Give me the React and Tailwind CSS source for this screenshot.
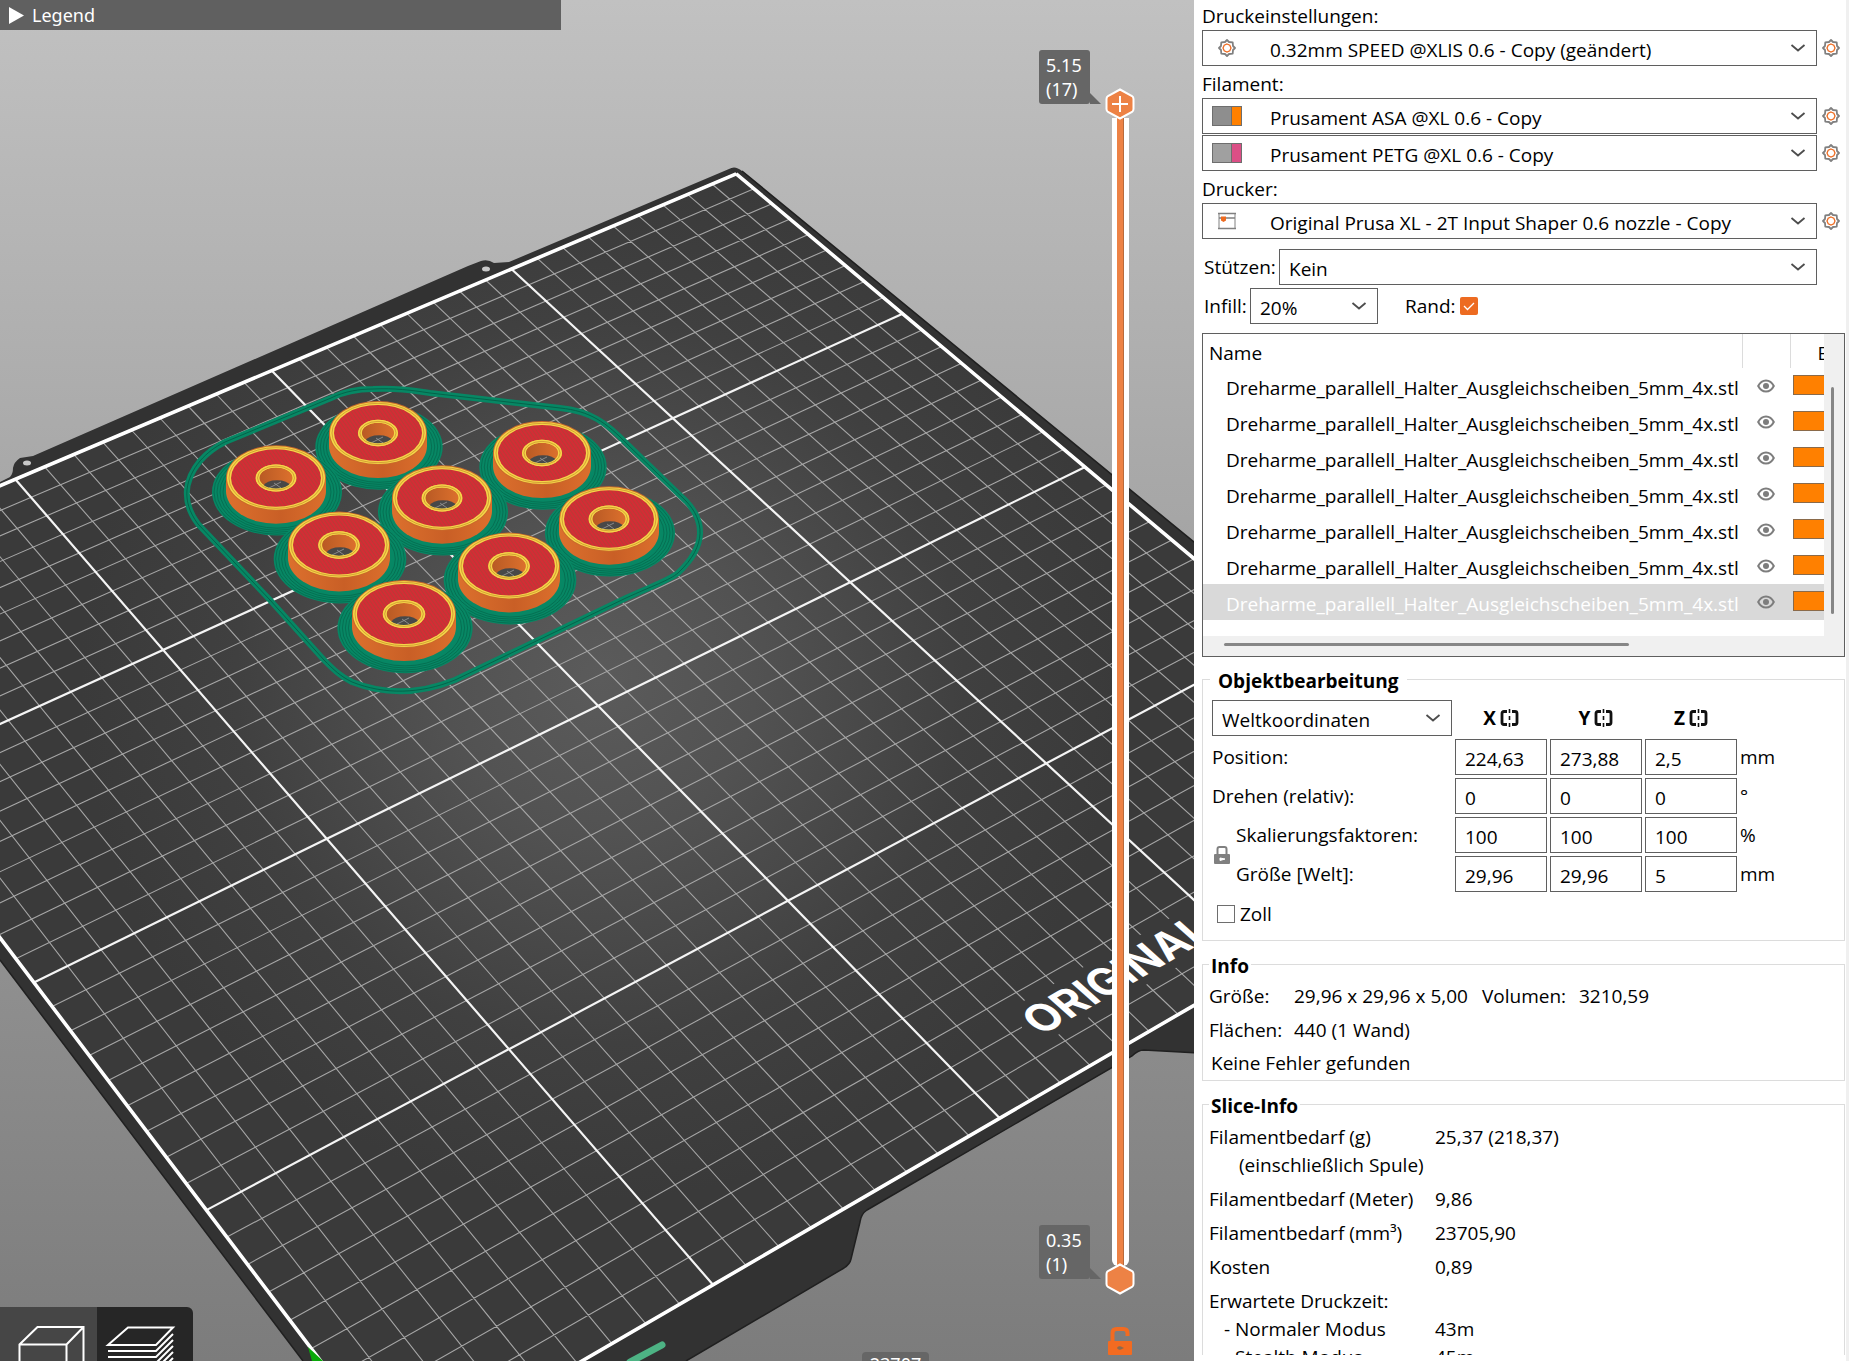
import { useState } from 'react';

/* ---------- 3D view ---------- */

// Maps bed tiles (0..4 in both directions) to screen space
const project = (x, y) => {
  const s = (x - 1) / 2;
  const t = (y - 1) / 3;
  const w = 1 + 0.080647 * s + 0.169972 * t;
  return [
    (508.94 + 621.68 * s - 491.01 * t) / w,
    (1049.2 - 224.23 * s - 488.55 * t) / w,
  ];
};

const line = (a, b) => {
  const [x1, y1] = project(...a);
  const [x2, y2] = project(...b);
  return `M${x1.toFixed(1)} ${y1.toFixed(1)}L${x2.toFixed(1)} ${y2.toFixed(1)}`;
};

const CELLS = 36;
const thinLines = [];
const thickLines = [];
for (let i = 0; i <= CELLS; i++) {
  const p = i / 9;
  const target = i % 9 === 0 ? thickLines : thinLines;
  target.push(line([p, 0], [p, 4]), line([0, p], [4, p]));
}
const bedArea = [[0, 0], [4, 0], [4, 4], [0, 4]].map((p) => project(...p).join(',')).join(' ');
const bedBorder = [
  line([0, 0], [4, 0]),
  line([4, 0], [4, 4]),
  line([4, 4], [0, 4]),
  line([0, 4], [0, 0]),
].join('');

const rings = [
  { x: 378, y: 433, rx: 49 },
  { x: 276, y: 478, rx: 50 },
  { x: 542, y: 453, rx: 49 },
  { x: 442, y: 498, rx: 50 },
  { x: 339, y: 545, rx: 51 },
  { x: 609, y: 519, rx: 50 },
  { x: 509, y: 566, rx: 51 },
  { x: 404, y: 614, rx: 52 },
];

const skirt =
  'M373 389C395 388 410 390 430 393L560 408C590 411 606 422 628 445L686 501C704 520 708 545 678 573C670 580 652 586 626 598L455 680C420 694 385 695 352 682C340 676 334 670 324 660L270 600L198 524C180 500 186 478 200 461C208 452 215 447 225 442L331 398C345 391 360 389 373 389Z';

function Brim({ x, y, rx }) {
  const r = rx * 1.3;
  return (
    <g>
      <ellipse cx={x + 1} cy={y + 14} rx={r} ry={r * 0.67} fill="#078764" />
      {[2, 5, 8, 11].map((d) => (
        <ellipse
          key={d}
          cx={x + 1}
          cy={y + 14}
          rx={r - d}
          ry={(r - d) * 0.67}
          fill="none"
          stroke="#056a4e"
          strokeWidth="0.8"
        />
      ))}
    </g>
  );
}

function Ring({ x, y, rx }) {
  const ry = rx * 0.655;
  const hx = rx * 0.41;
  const hy = rx * 0.27;
  const clip = `hole-${x}`;
  return (
    <g>
      <clipPath id={clip}>
        <ellipse cx={x} cy={y} rx={hx} ry={hy} />
      </clipPath>
      <path
        d={`M${x - rx} ${y}V${y + 13}A${rx} ${ry} 0 0 0 ${x + rx} ${y + 13}V${y}Z`}
        fill="url(#side)"
      />
      <ellipse cx={x} cy={y} rx={rx} ry={ry} fill="#c9692b" />
      <ellipse cx={x} cy={y} rx={rx - 1} ry={ry - 1} fill="#f5d548" />
      <ellipse cx={x} cy={y} rx={rx - 3} ry={ry - 2.4} fill="none" stroke="#c68a2c" strokeWidth="0.7" />
      <ellipse cx={x} cy={y} rx={rx - 5} ry={ry - 4} fill="url(#infill)" />
      <ellipse cx={x} cy={y} rx={hx} ry={hy} fill="#f5d548" />
      <ellipse cx={x} cy={y} rx={hx - 4} ry={hy - 3} fill="url(#bore)" />
      <g clipPath={`url(#${clip})`}>
        <path
          d={`M${x - 13} ${y + 8}A15 9 0 0 1 ${x + 15} ${y + 8}A17 10 0 0 1 ${x - 13} ${y + 8}Z`}
          fill="#484848"
        />
        <path d={`M${x - 7} ${y + 10}l12 -6M${x - 2} ${y + 5}l7 5`} stroke="#9a9a9a" strokeWidth="0.8" />
      </g>
      <ellipse cx={x} cy={y} rx={hx - 2} ry={hy - 1.6} fill="none" stroke="#f5d548" strokeWidth="3" />
      <ellipse cx={x} cy={y} rx={hx - 2} ry={hy - 1.6} fill="none" stroke="#c68a2c" strokeWidth="0.7" />
    </g>
  );
}

function BedScene() {
  return (
    <svg
      className="absolute inset-0 w-full h-full"
      viewBox="0 0 1194 1361"
      preserveAspectRatio="xMinYMin slice"
      aria-hidden="true"
    >
      <defs>
        <radialGradient id="bed" gradientUnits="userSpaceOnUse" cx="600" cy="680" r="520">
          <stop offset="0" stopColor="#5b5b5b" />
          <stop offset="0.3" stopColor="#525252" />
          <stop offset="0.7" stopColor="#404040" />
          <stop offset="1" stopColor="#3a3a3a" />
        </radialGradient>
        <linearGradient id="side" x1="0" x2="1" y1="0" y2="0">
          <stop offset="0" stopColor="#dc702d" />
          <stop offset="0.55" stopColor="#c95f26" />
          <stop offset="1" stopColor="#dc6f2c" />
        </linearGradient>
        <linearGradient id="bore" x1="0" x2="1" y1="0" y2="0">
          <stop offset="0" stopColor="#b95a24" />
          <stop offset="1" stopColor="#dc702d" />
        </linearGradient>
        <pattern id="infill" width="3" height="3" patternUnits="userSpaceOnUse" patternTransform="rotate(-35)">
          <rect width="3" height="3" fill="#d42c35" />
          <rect width="1" height="3" fill="#b93b36" />
        </pattern>
      </defs>

      {/* Sheet */}
      <path
        d="M729 169Q735 165 742 171L1200 547V1053L1144 1050Q1138 1050 1132 1056L867 1210Q861 1214 860 1222L851 1259Q850 1264 844 1268L686 1361H303L0 960V482L10 477Q13 474 13 468Q14 462 20 458L33 456L468 266L481 261Q488 259 494 263L509 262Z"
        fill="#323232"
      />
      <polygon points={bedArea} fill="url(#bed)" />
      <ellipse cx="486" cy="269" rx="4" ry="2.5" fill="#c8c8c8" />
      <ellipse cx="27" cy="463" rx="4" ry="2.5" fill="#c8c8c8" />
      <path d="M742 171L1200 547M1200 1053L1144 1050Q1138 1050 1132 1056L867 1210Q861 1214 860 1222L851 1259Q850 1264 844 1268L686 1361M303 1361L0 960" fill="none" stroke="#202020" strokeWidth="1.5" />

      {/* Grid */}
      <path d={thinLines.join('')} stroke="#a6a6a6" strokeWidth="1.1" />
      <path d={thickLines.join('')} stroke="#f4f4f4" strokeWidth="2.2" />
      <path d={bedBorder} stroke="#ffffff" strokeWidth="3.6" />

      {/* Bed print */}
      <polygon points="1022,1002 1200,901 1200,954 1056,1036 1022,1032" fill="url(#bed)" />
      <text
        transform="translate(1041 1036) rotate(-30) skewX(18)"
        fontFamily="Inter, 'Liberation Sans', sans-serif"
        fontWeight="700"
        fontSize="42"
        fill="#ffffff"
      >
        ORIGINAL
      </text>

      {/* Skirt and brims */}
      <path d={skirt} fill="none" stroke="#078764" strokeWidth="6" />
      <path d={skirt} fill="none" stroke="#05634a" strokeWidth="1" />
      {rings.map((r) => (
        <Brim key={`${r.x}-${r.y}`} {...r} />
      ))}
      {rings.map((r) => (
        <Ring key={`${r.x}-${r.y}`} {...r} />
      ))}

      {/* Axes */}
      <path d="M308 1347L323 1361H312Z" fill="#0aa80a" />
      <path d="M630 1362L662 1345" stroke="#4db384" strokeWidth="7" strokeLinecap="round" />
    </svg>
  );
}

function ViewButton({ label, active, children }) {
  return (
    <button
      type="button"
      aria-label={label}
      className={active ? 'w-24 h-full bg-[#262626] rounded-tr-md' : 'w-[97px] h-full bg-[#464646]'}
    >
      <svg className="w-full h-full" viewBox="0 0 96 54" fill="none" stroke="#ffffff" strokeWidth="2">
        {children}
      </svg>
    </button>
  );
}

function Thumb({ plus }) {
  return (
    <svg className="w-[30px] h-8 shrink-0 relative" viewBox="0 0 30 32">
      <path
        d="M15 1.5L27 8Q28.500 9 28.500 11V21Q28.500 23 27 24L15 30.500L3 24Q1.500 23 1.500 21V11Q1.500 9 3 8Z"
        fill="#ed8245"
        stroke="#ffffff"
        strokeWidth="2"
      />
      {plus && <path d="M15 8V24M7 16H23" stroke="#ffffff" strokeWidth="2" />}
    </svg>
  );
}

function LayerTag({ height, layer }) {
  return (
    <div className="relative w-[51px] h-[54px] bg-[#666666] rounded-[3px] px-[7px] text-white text-[18px] leading-6 py-[3px]">
      <div>{height}</div>
      <div>{layer}</div>
      <svg className="absolute left-full bottom-0 w-3 h-3" viewBox="0 0 12 12">
        <path d="M-1 0L11 12H-1Z" fill="#666666" />
      </svg>
    </div>
  );
}

function LayerSlider() {
  return (
    <div className="absolute right-[59px] top-[50px] bottom-[5px] w-[96px] flex flex-col">
      <div className="flex justify-between">
        <LayerTag height="5.15" layer="(17)" />
      </div>
      {/* Track */}
      <div className="relative flex-1 flex flex-col items-end -mt-4">
        <Thumb plus />
        <div className="w-[17px] mr-[6px] -mt-[2px] -mb-[2px] flex-1 bg-white rounded-b-md flex justify-center">
          <div className="w-[7px] bg-[#ed8245] border-r border-[#b96a3c]" />
        </div>
        <div className="w-full flex items-end justify-between h-[31px]">
          <div className="mb-4">
            <LayerTag height="0.35" layer="(1)" />
          </div>
          <Thumb />
        </div>
        <input
          type="range"
          aria-label="Oberste Schicht"
          min="1"
          max="17"
          defaultValue="17"
          className="absolute right-0 top-0 w-[30px] h-1/2 opacity-0 [writing-mode:vertical-lr]"
        />
        <input
          type="range"
          aria-label="Unterste Schicht"
          min="1"
          max="17"
          defaultValue="1"
          className="absolute right-0 bottom-0 w-[30px] h-1/2 opacity-0 [writing-mode:vertical-lr]"
        />
      </div>
      <button type="button" aria-label="Schieber entsperren" className="self-end mr-[3px] mt-8">
        <svg className="w-6 h-[29px]" viewBox="0 0 24 29">
          <path d="M4.500 15V6Q4.500 2 8.500 2H15.500Q19.500 2 19.500 6V9" fill="none" stroke="#f26b21" strokeWidth="4" />
          <path d="M1 14H23Q24 14 24 15V27Q24 28 23 28H1Q0 28 0 27V15Q0 14 1 14Z" fill="#f26b21" />
          <path d="M9 21a3 2.500 0 0 1 5 -1l2 1l-2 1a3 2.500 0 0 1 -5 -1Z" fill="#8a6a50" />
        </svg>
      </button>
    </div>
  );
}

function Viewport() {
  return (
    <main className="relative flex-1 min-w-0 h-full overflow-hidden bg-linear-to-b from-[#c1c1c1] to-[#7c7c7c] font-['Noto_Sans',sans-serif]">
      <BedScene />
      <button
        type="button"
        className="relative flex items-center gap-2 w-[561px] max-w-full h-[30px] bg-[#606060] pl-[9px] text-white text-[18px] leading-6"
      >
        <svg className="w-[15px] h-[17px]" viewBox="0 0 15 17">
          <path d="M0 0L15 8.500L0 17Z" fill="#ffffff" />
        </svg>
        Legend
      </button>

      <div className="absolute left-0 bottom-0 h-[54px] flex">
        <ViewButton label="3D-Editor">
          <path d="M19 70V37.500L37 20H83V60L66 70M19 37.500H66V70M66 37.500L83 20" />
        </ViewButton>
        <ViewButton label="Vorschau" active>
          <path d="M11 38L31 20.500H76L59 38ZM11 44H59L76 27M11 50H59L76 33M60 55L76 39M65 56L76 45M70 57L76 51" />
        </ViewButton>
      </div>

      <div className="absolute left-[862px] bottom-0 w-[67px] h-[9px] overflow-hidden bg-[#666666] rounded-t-sm text-center text-white text-[18px] leading-6">
        23707
      </div>

      <LayerSlider />
    </main>
  );
}

/* ---------- Sidebar ---------- */

function Chevron() {
  return (
    <svg className="w-4 h-4 shrink-0 pointer-events-none" viewBox="0 0 16 16" fill="none">
      <path d="M1.500 5L8 10.500L14.500 5" stroke="#4d4d4d" strokeWidth="1.800" />
    </svg>
  );
}

function Gear() {
  return (
    <svg className="w-[18px] h-[18px] shrink-0" viewBox="0 0 18 18" fill="none">
      <path
        d="M9 1L11 3L14.700 3.300L15 7L17 9L15 11L14.700 14.700L11 15L9 17L7 15L3.300 14.700L3 11L1 9L3 7L3.300 3.300L7 3Z"
        stroke="#808080"
        strokeWidth="1.800"
        strokeLinejoin="round"
      />
      <path d="M9 5L11.800 6.200L13 9L11.800 11.800L9 13L6.200 11.800L5 9L6.200 6.200Z" stroke="#ed6b21" strokeWidth="1.300" />
    </svg>
  );
}

function PrinterIcon() {
  return (
    <svg className="w-[18px] h-[18px] shrink-0" viewBox="0 0 18 18" fill="none">
      <path d="M1 1V17M17 1V17" stroke="#808080" strokeWidth="1" />
      <path d="M0 1.500H18M1 6H17M0 16.500H18" stroke="#808080" strokeWidth="1.500" />
      <path d="M3 4.500H8V8.500L5.500 10L3 8.500Z" fill="#ed6b21" />
    </svg>
  );
}

function Spool({ base, color }) {
  return (
    <span className="flex w-[30px] h-5 border border-[#6e6e6e]" style={{ background: base }}>
      <span className="ml-auto w-[10px] border-l border-[#6e6e6e]" style={{ background: color }} />
    </span>
  );
}

function Combo({ id, label, value, icon, className }) {
  return (
    <div className={`flex items-center h-9 border border-[#5f5f5f] bg-white pr-[10px] ${className}`}>
      {icon && <span className="w-[48px] shrink-0 flex justify-center">{icon}</span>}
      <select
        id={id}
        aria-label={label}
        defaultValue={value}
        className={`flex-1 min-w-0 h-full appearance-none bg-transparent outline-none pt-1 ${icon ? 'pl-[19px]' : 'pl-[9px]'}`}
      >
        <option>{value}</option>
      </select>
      <Chevron />
    </div>
  );
}

function PresetRow({ id, label, value, icon }) {
  return (
    <div className="flex items-center gap-[5px]">
      <Combo id={id} label={label} value={value} icon={icon} className="flex-1 min-w-0" />
      <button type="button" aria-label={`${label} bearbeiten`}>
        <Gear />
      </button>
    </div>
  );
}

function Eye() {
  return (
    <svg className="w-[18px] h-[14px] mx-auto" viewBox="0 0 18 14" fill="none">
      <path d="M1.200 7Q4 1.500 9 1.500T16.800 7Q14 12.500 9 12.500T1.200 7Z" stroke="#7d7d7d" strokeWidth="2" />
      <circle cx="9" cy="7" r="3" fill="#7d7d7d" />
    </svg>
  );
}

function ObjectList() {
  const [selected, setSelected] = useState(6);
  const objects = Array(7).fill('Dreharme_parallell_Halter_Ausgleichscheiben_5mm_4x.stl');

  return (
    <div className="mt-[9px] mr-[-28px] border border-[#5f5f5f] bg-[#f0f0f0]">
      <div className="flex">
        <div className="flex-1 min-w-0 overflow-hidden bg-white pb-4">
          <table className="w-full table-fixed border-collapse">
            <thead>
              <tr className="h-[34px] text-left">
                <th className="font-normal pl-[6px] pt-1">Name</th>
                <th className="w-12 border-l border-[#dcdcdc]" aria-label="Sichtbar" />
                <th className="w-[34px] border-l border-[#dcdcdc] font-normal pt-1 overflow-hidden">
                  <div className="w-[6px] ml-[27px] overflow-hidden">E</div>
                </th>
              </tr>
            </thead>
            <tbody>
              {objects.map((name, i) => (
                <tr
                  key={i}
                  onClick={() => setSelected(i)}
                  className={i === selected ? 'h-9 bg-[#d9d9d9] text-white' : 'h-9'}
                >
                  <td className="pl-[23px] pt-1 whitespace-nowrap">{name}</td>
                  <td>
                    <Eye />
                  </td>
                  <td className="pl-[3px] pb-[2px]">
                    <div className="h-5 bg-[#ff8000] border border-r-0 border-[#8a6a4a]" />
                  </td>
                </tr>
              ))}
            </tbody>
          </table>
        </div>
        <div className="w-5 pt-[53px] shrink-0">
          <div className="w-[3px] h-[227px] ml-[7px] bg-[#868686] rounded-full" />
        </div>
      </div>
      <div className="h-5 flex items-start pt-[7px] pl-[21px]">
        <div className="w-[405px] h-[3px] bg-[#868686] rounded-full" />
      </div>
    </div>
  );
}

function Group({ title, wide, className, children }) {
  return (
    <fieldset className={`border border-[#dcdcdc] mr-[-28px] ${className}`}>
      <legend className={`font-bold leading-5 pt-1 ${wide ? '-ml-[2px] px-2' : 'px-[2px]'}`}>{title}</legend>
      {children}
    </fieldset>
  );
}

function MirrorIcon() {
  return (
    <svg className="w-[19px] h-[18px]" viewBox="0 0 19 18" fill="none" stroke="#111111">
      <path d="M7 2.500H4Q2 2.500 2 4.500V13.500Q2 15.500 4 15.500H7M12 2.500H15Q17 2.500 17 4.500V13.500Q17 15.500 15 15.500H12" strokeWidth="2.800" />
      <path d="M9.500 0V4M9.500 7V11M9.500 14V18" strokeWidth="1.600" />
    </svg>
  );
}

function ValueRow({ name, values, unit }) {
  return (
    <>
      {values.map((v, i) => (
        <input
          key={i}
          type="text"
          aria-label={`${name} ${'XYZ'[i]}`}
          defaultValue={v}
          className="w-full h-9 border border-[#5f5f5f] bg-white pl-[9px] pt-1 outline-none"
        />
      ))}
      <span>{unit}</span>
    </>
  );
}

function ObjectManipulation() {
  return (
    <Group title="Objektbearbeitung" wide className="mt-[10px] pt-[9px] pb-3 pl-[9px]">
      <div className="grid grid-cols-[240px_92px_92px_92px_1fr] auto-rows-[36px] gap-[3px] items-center">
        <Combo label="Koordinatensystem" value="Weltkoordinaten" />
        {['X', 'Y', 'Z'].map((axis) => (
          <div key={axis} className="flex items-center justify-center gap-1 font-bold">
            {axis}
            <button type="button" aria-label={`${axis} spiegeln`}>
              <MirrorIcon />
            </button>
          </div>
        ))}
        <span />

        <span>Position:</span>
        <ValueRow name="Position" values={['224,63', '273,88', '2,5']} unit="mm" />

        <span>Drehen (relativ):</span>
        <ValueRow name="Drehen" values={['0', '0', '0']} unit="°" />

        <div className="row-span-2 flex items-center gap-1">
          <button type="button" aria-label="Skalierung sperren">
            <svg className="w-5 h-5" viewBox="0 0 20 20">
              <path d="M5.500 10V4Q5.500 2 7.500 2H12.500Q14.500 2 14.500 4V10" fill="none" stroke="#808080" strokeWidth="2" />
              <rect x="2" y="9" width="16" height="10" rx="1" fill="#808080" />
              <path d="M8 13L13 14L8 15.500Z" fill="#ffffff" stroke="#ffffff" />
            </svg>
          </button>
          <div className="flex flex-col gap-[3px] leading-9">
            <span>Skalierungsfaktoren:</span>
            <span>Größe [Welt]:</span>
          </div>
        </div>
        <ValueRow name="Skalierung" values={['100', '100', '100']} unit="%" />
        <ValueRow name="Größe" values={['29,96', '29,96', '5']} unit="mm" />
      </div>
      <label className="flex items-center gap-[5px] mt-2 pl-[5px]">
        <input type="checkbox" className="appearance-none w-[18px] h-[18px] border border-[#6e6e6e] bg-white" />
        Zoll
      </label>
    </Group>
  );
}

const sliceRows = [
  { label: 'Filamentbedarf (g)', value: '25,37 (218,37)', height: 'h-7' },
  { label: '(einschließlich Spule)', indent: 'pl-[30px]', height: 'h-[34px]' },
  { label: 'Filamentbedarf (Meter)', value: '9,86', height: 'h-[34px]' },
  { label: 'Filamentbedarf (mm³)', value: '23705,90', height: 'h-[34px]' },
  { label: 'Kosten', value: '0,89', height: 'h-[34px]' },
  { label: 'Erwartete Druckzeit:', height: 'h-7' },
  { label: '- Normaler Modus', value: '43m', indent: 'pl-[15px]', height: 'h-7' },
  { label: '- Stealth Modus', value: '45m', indent: 'pl-[15px]', height: 'h-7' },
];

function Sidebar() {
  return (
    <aside className="w-[655px] shrink-0 h-full bg-white border-r-[3px] border-[#f0f0f0] overflow-hidden pb-[6px] flex flex-col">
      <div className="flex-1 min-h-0 overflow-hidden pl-2 pr-[29px]">
        <div className="-mr-[23px]">
          <label htmlFor="print" className="block h-[30px] pt-[2px] leading-7">Druckeinstellungen:</label>
          <PresetRow id="print" label="Druckeinstellungen" value="0.32mm SPEED @XLIS 0.6 - Copy (geändert)" icon={<Gear />} />

          <label htmlFor="filament" className="block h-8 pt-1 leading-7">Filament:</label>
          <PresetRow id="filament" label="Filament 1" value="Prusament ASA @XL 0.6 - Copy" icon={<Spool base="#8e8e8e" color="#ff8000" />} />
          <div className="h-px" />
          <PresetRow id="filament2" label="Filament 2" value="Prusament PETG @XL 0.6 - Copy" icon={<Spool base="#a0a0a0" color="#db4f86" />} />

          <label htmlFor="printer" className="block h-8 pt-1 leading-7">Drucker:</label>
          <PresetRow id="printer" label="Drucker" value="Original Prusa XL - 2T Input Shaper 0.6 nozzle - Copy" icon={<PrinterIcon />} />
        </div>

        <div className="flex items-center mt-[10px] pl-[2px]">
          <label htmlFor="supports" className="w-[75px]">Stützen:</label>
          <Combo id="supports" value="Kein" className="flex-1" />
        </div>

        <div className="flex items-center mt-[3px] pl-[2px]">
          <label htmlFor="infill" className="w-[46px]">Infill:</label>
          <Combo id="infill" value="20%" className="w-32" />
          <label htmlFor="brim" className="ml-[27px]">Rand:</label>
          <span className="relative ml-1 w-[18px] h-[18px]">
            <input id="brim" type="checkbox" defaultChecked className="block appearance-none w-[18px] h-[18px] rounded-xs bg-[#ed6b21]" />
            <svg className="absolute inset-0 pointer-events-none" viewBox="0 0 18 18" fill="none">
              <path d="M4 9L7.500 12.500L14 6" stroke="#ffffff" strokeWidth="1.300" />
            </svg>
          </span>
        </div>

        <ObjectList />
        <ObjectManipulation />

        <Group title="Info" className="mt-[11px] pl-[6px]">
          <dl className="grid grid-cols-[85px_188px_97px_1fr] leading-[34px] pt-[3px]">
            <dt>Größe:</dt>
            <dd>29,96 x 29,96 x 5,00</dd>
            <dt>Volumen:</dt>
            <dd>3210,59</dd>
            <dt>Flächen:</dt>
            <dd className="col-span-3">440 (1 Wand)</dd>
          </dl>
          <p className="leading-[33px] pl-[2px]">Keine Fehler gefunden</p>
        </Group>

        <Group title="Slice-Info" className="mt-[11px] pl-[6px] pb-10">
          <table className="mt-[7px]">
            <tbody>
              {sliceRows.map((row) => (
                <tr key={row.label} className={row.height}>
                  <td className={`w-[226px] p-0 align-top leading-7 whitespace-nowrap ${row.indent || ''}`}>{row.label}</td>
                  <td className="p-0 align-top leading-7">{row.value}</td>
                </tr>
              ))}
            </tbody>
          </table>
        </Group>
      </div>
    </aside>
  );
}

export default function App() {
  return (
    <div className="flex w-full h-screen overflow-hidden bg-white text-black font-['Open_Sans',sans-serif] text-[19px] leading-7">
      <Viewport />
      <Sidebar />
    </div>
  );
}
